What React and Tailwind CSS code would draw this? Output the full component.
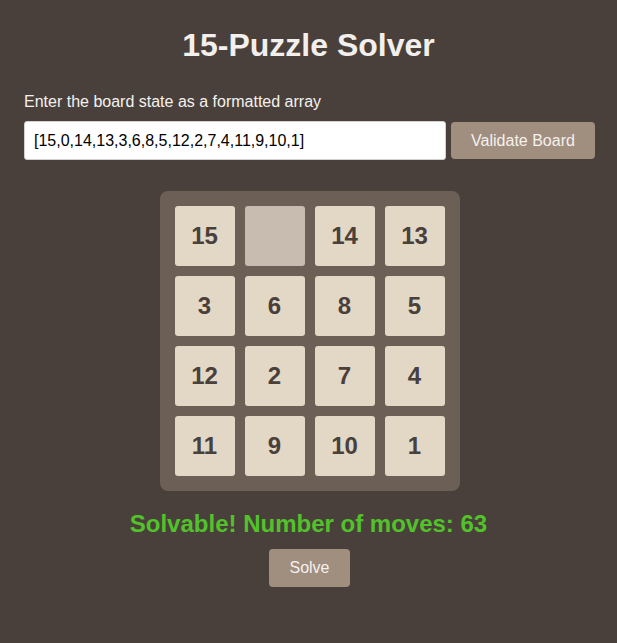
import React, { useState } from 'react';

const initial = [15, 0, 14, 13, 3, 6, 8, 5, 12, 2, 7, 4, 11, 9, 10, 1];

export default function App() {
  const [input, setInput] = useState('[15,0,14,13,3,6,8,5,12,2,7,4,11,9,10,1]');
  const [board] = useState(initial);

  return (
    <div className="min-h-[643px] bg-[#4a403b] px-6 pt-[27px] text-white" style={{ fontFamily: '"Liberation Sans", Arial, sans-serif' }}>
      <h1 className="text-center text-[32px] font-bold leading-[36px] text-[#f2efed]">15-Puzzle Solver</h1>

      <label className="mt-[30px] block text-[16px] leading-[18px] text-[#f4f1ee]">Enter the board state as a formatted array</label>
      <div className="mt-[10px] flex items-center gap-[5px]">
        <input
          value={input}
          onChange={(e) => setInput(e.target.value)}
          className="h-[39px] w-[422px] shrink-0 rounded-[3px] border border-[#d0d0d0] bg-white px-[9px] text-[16px] text-black outline-none"
        />
        <button className="h-[37px] w-[144px] shrink-0 rounded-[4px] bg-[#a08e7e] text-[16px] text-[#f5f1ee]">Validate Board</button>
      </div>

      {/* Board */}
      <div className="mt-[31px] flex justify-center pl-[2px]">
        <div className="grid w-[300px] grid-cols-4 gap-[10px] rounded-[8px] bg-[#6b5f56] p-[15px]">
          {board.map((n, i) =>
            n === 0 ? (
              <div key={i} className="h-[60px] w-[60px] rounded-[3px] bg-[#c8bcb0]" />
            ) : (
              <div key={i} className="flex h-[60px] w-[60px] items-center justify-center rounded-[3px] bg-[#e3d7c6] text-[24px] font-bold text-[#4a403b]">
                {n}
              </div>
            )
          )}
        </div>
      </div>

      <p className="mt-[19px] text-center text-[24px] font-bold leading-[28px] text-[#52c22b]">Solvable! Number of moves: 63</p>
      <div className="mt-[11px] flex justify-center pl-[2px]">
        <button className="h-[38px] w-[81px] rounded-[4px] bg-[#a08e7e] text-[16px] text-[#f5f1ee]">Solve</button>
      </div>
    </div>
  );
}
